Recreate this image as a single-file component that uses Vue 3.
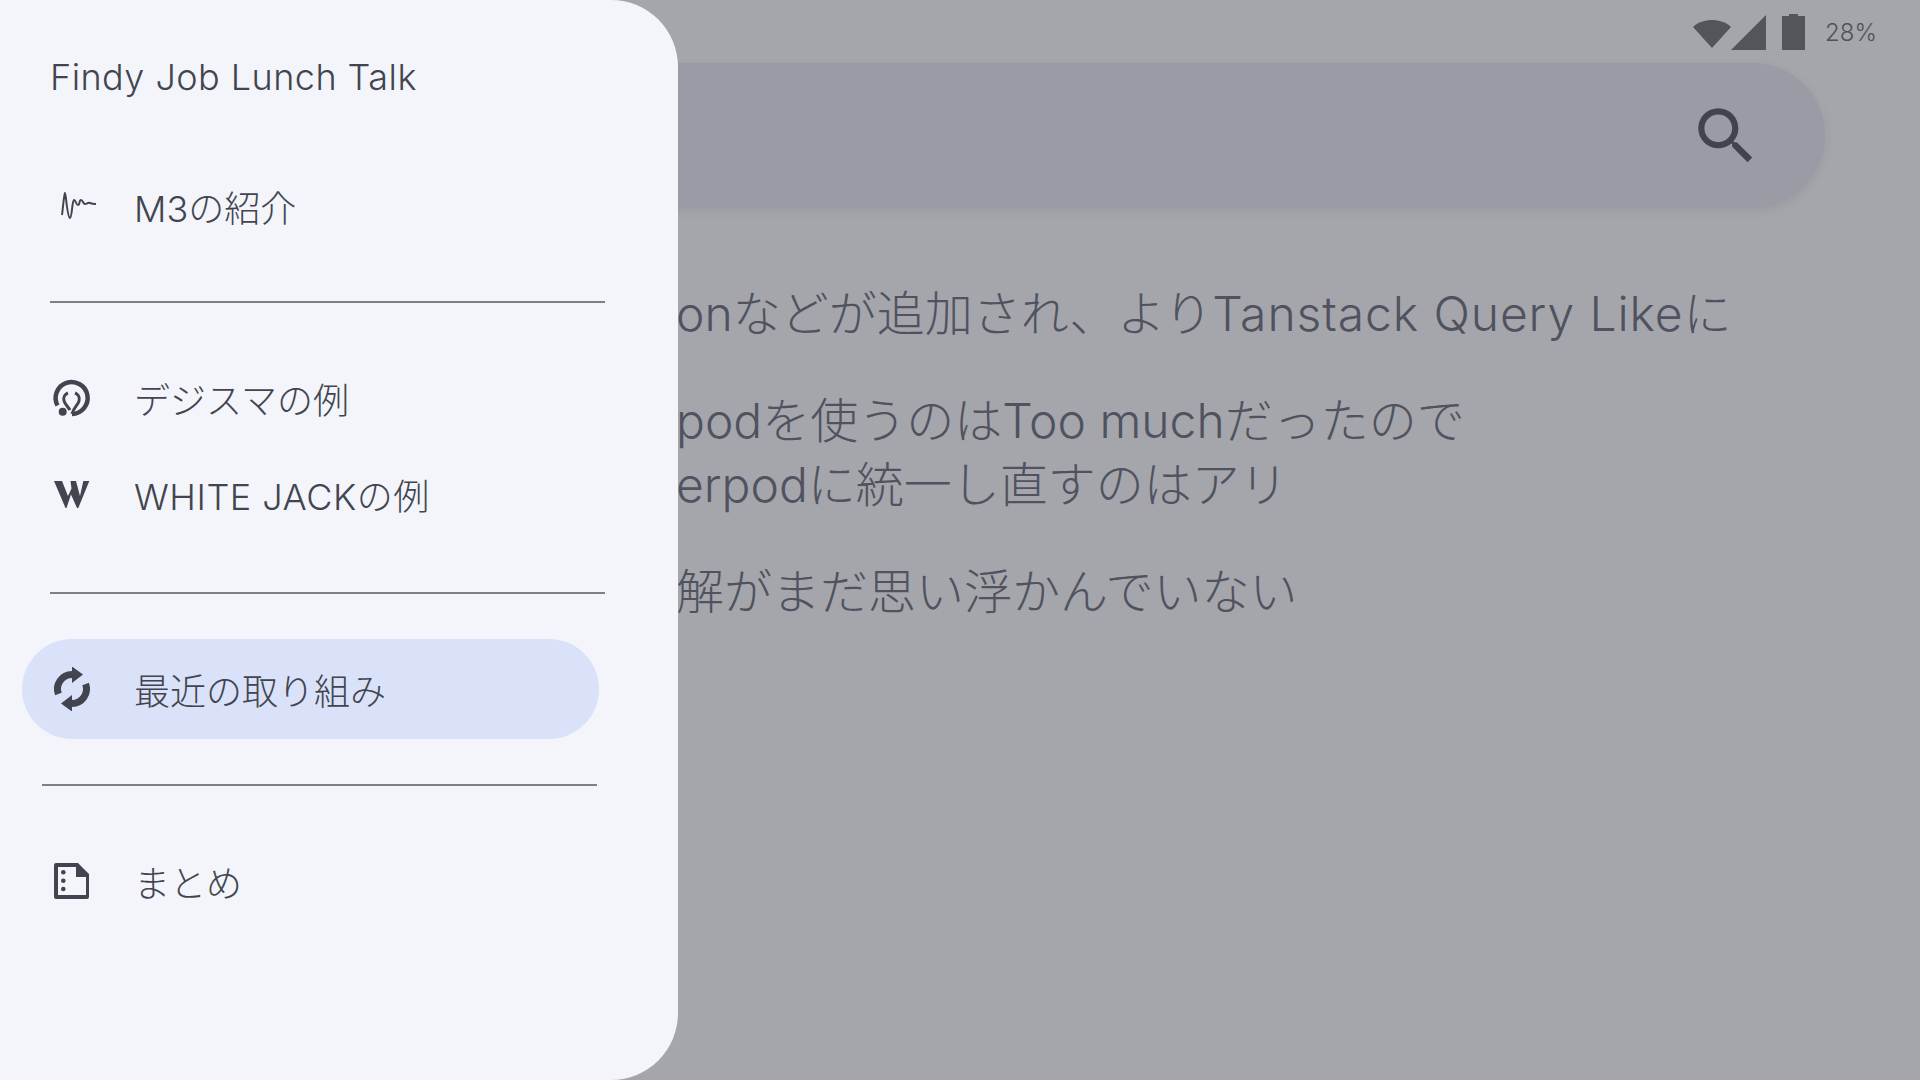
<script setup>
const lines = [
  { before: 'podを使うのはToo muchだったので', cls: 'second' },
  { before: 'erpodに統一し直すのはアリ', cls: 'third' },
  { before: '解がまだ思い浮かんでいない', cls: 'fourth' },
]
</script>

<template>
  <div class="screen">
    <div class="status">
      <svg class="wifi" width="38" height="30" viewBox="0 0 38 30" aria-hidden="true">
        <path d="M0 9C5 4 12 2 19 2s14 2 19 7L19 30z" />
      </svg>
      <svg class="signal" width="36" height="35" viewBox="0 0 36 35" aria-hidden="true">
        <path d="M0 35 35 0v35z" />
      </svg>
      <svg class="battery" width="23" height="36" viewBox="0 0 23 36" aria-hidden="true">
        <path d="M7 0h9v2h7v34H0V2h7z" />
      </svg>
      <span class="percent">28%</span>
    </div>

    <div class="search">
      <svg width="74" height="74" viewBox="0 0 24 24" aria-hidden="true">
        <path d="M15.5 14h-.79l-.28-.27A6.47 6.47 0 0 0 16 9.5 6.5 6.5 0 1 0 9.5 16c1.61 0 3.09-.59 4.23-1.57l.27.28v.79l5 4.99L20.49 19l-4.99-5zm-6 0C7.01 14 5 11.99 5 9.5S7.01 5 9.5 5 14 7.01 14 9.5 11.99 14 9.5 14z" />
      </svg>
    </div>

    <div class="content">
      <p class="line">onなどが追加され、より<span class="wide">Tanstack Query Like</span>に</p>
      <p v-for="line in lines" :key="line.before" :class="['line', line.cls]">{{ line.before }}</p>
    </div>

    <aside class="drawer">
      <div class="title">Findy Job Lunch Talk</div>

      <div class="row">
        <svg class="icon" viewBox="0 0 60 44" aria-hidden="true">
          <path class="wave" d="M12 31C13 24 14 10 15 9c1 0 2 24 5 25 2 0 2-17 4-18 2 0 2 5 4 5s1-5 3-5 2 4 4 4 3-2 5-1 3 1 6 1" />
        </svg>
        <span>M3の紹介</span>
      </div>

      <hr class="divider" />

      <div class="row">
        <svg class="icon" viewBox="0 0 60 44" aria-hidden="true">
          <path class="ring" d="M7.500 29.500A16 16 0 1 1 22 38" />
          <path class="ring thin" d="M18 17c-3 1-5 4-4 8 1 3 4 6 6 9M25 17c3 1 5 4 4 8-1 4-5 6-7 13" />
          <circle cx="12.700" cy="35.700" r="4" />
        </svg>
        <span>デジスマの例</span>
      </div>
      <div class="row">
        <svg class="icon" viewBox="0 0 60 44" aria-hidden="true">
          <path d="M4 9h8l6 15 3.500-7.500L20.500 9H26l4 15 3.300-15h6L28.300 36H27L21 22.500 16.500 36h-1z" />
        </svg>
        <span class="spaced">WHITE JACKの例</span>
      </div>

      <hr class="divider second-divider" />

      <div class="row active">
        <svg class="icon" viewBox="0 0 60 44" aria-hidden="true">
          <g transform="translate(1 0)">
            <path class="sync" d="M7.400 27A14.500 14.500 0 0 1 21 7.500M34.600 17A14.500 14.500 0 0 1 21 36.500" />
            <path d="M21-.5 32 7.500 21 16zM21 44.500 10 36.500 21 28z" />
          </g>
        </svg>
        <span>最近の取り組み</span>
      </div>

      <hr class="divider third-divider" />

      <div class="row">
        <svg class="icon" viewBox="0 0 60 44" aria-hidden="true">
          <path fill-rule="evenodd" d="M6 4h22l11 11v23a2 2 0 0 1-2 2H6a2 2 0 0 1-2-2V6a2 2 0 0 1 2-2zm2 4v28h28V18H26V8z" />
          <circle cx="13.300" cy="13.300" r="2.300" />
          <circle cx="13.300" cy="21.700" r="2.300" />
          <circle cx="13.300" cy="30" r="2.300" />
        </svg>
        <span>まとめ</span>
      </div>
    </aside>
  </div>
</template>

<style>
body {
  margin: 0;
}
</style>

<style scoped>
.screen {
  position: relative;
  width: 1920px;
  height: 1080px;
  overflow: hidden;
  background: #a5a6ab;
  font-family: Inter, "Noto Sans CJK JP", sans-serif;
  font-weight: 300;
}

.status {
  display: flex;
  justify-content: flex-end;
  align-items: flex-start;
  height: 63px;
  padding: 14px 47px 0 0;
  box-sizing: border-box;
}

.status svg {
  fill: #54555b;
}

.wifi {
  margin-top: 4px;
}

.signal {
  margin-top: 1px;
  margin-right: 15px;
}

.percent {
  width: 48px;
  margin-left: 20px;
  font-size: 24px;
  line-height: 38px;
  white-space: nowrap;
  color: #50525a;
}

.search {
  display: flex;
  justify-content: flex-end;
  align-items: center;
  width: 1825px;
  height: 145px;
  padding-right: 62px;
  box-sizing: border-box;
  border-radius: 72px;
  background: #9a9ba5;
  box-shadow: 0 3px 8px rgba(70, 72, 90, 0.1);
}

.search svg {
  fill: #41444e;
}

.content {
  padding: 74px 0 0 676px;
  color: #50535f;
  font-size: 48px;
  line-height: 64px;
}

.line {
  margin: 0;
  white-space: nowrap;
}

.wide {
  letter-spacing: 0.9px;
}

.second,
.fourth {
  margin-top: 43px;
}

.drawer {
  position: absolute;
  top: 0;
  left: 0;
  width: 678px;
  height: 1080px;
  border-radius: 0 67px 67px 0;
  background: #f3f5fb;
  color: #42454f;
  font-size: 36px;
}

.title {
  height: 158px;
  padding: 50px 0 0 50px;
  box-sizing: border-box;
  line-height: 54px;
  letter-spacing: 0.45px;
}

.row {
  display: flex;
  align-items: center;
  gap: 24px;
  height: 96px;
  padding-left: 50px;
}

.spaced {
  letter-spacing: 0.5px;
}

.icon {
  flex: none;
  width: 60px;
  height: 44px;
  fill: #42454f;
}

.wave {
  fill: none;
  stroke: #42454f;
  stroke-width: 2;
}

.ring {
  fill: none;
  stroke: #42454f;
  stroke-width: 4.500;
}

.ring.thin {
  stroke-width: 3;
}

.sync {
  fill: none;
  stroke: #42454f;
  stroke-width: 7;
}

.divider {
  width: 555px;
  height: 2px;
  margin: 47px 0 47px 50px;
  border: 0;
  background: #7c7e88;
}

.second-divider {
  margin: 50px 0 45px 50px;
}

.active {
  width: 577px;
  height: 100px;
  margin-left: 22px;
  padding-left: 28px;
  box-sizing: border-box;
  border-radius: 50px;
  background: #d9e2f8;
}

.third-divider {
  margin: 45px 0 47px 42px;
}
</style>
